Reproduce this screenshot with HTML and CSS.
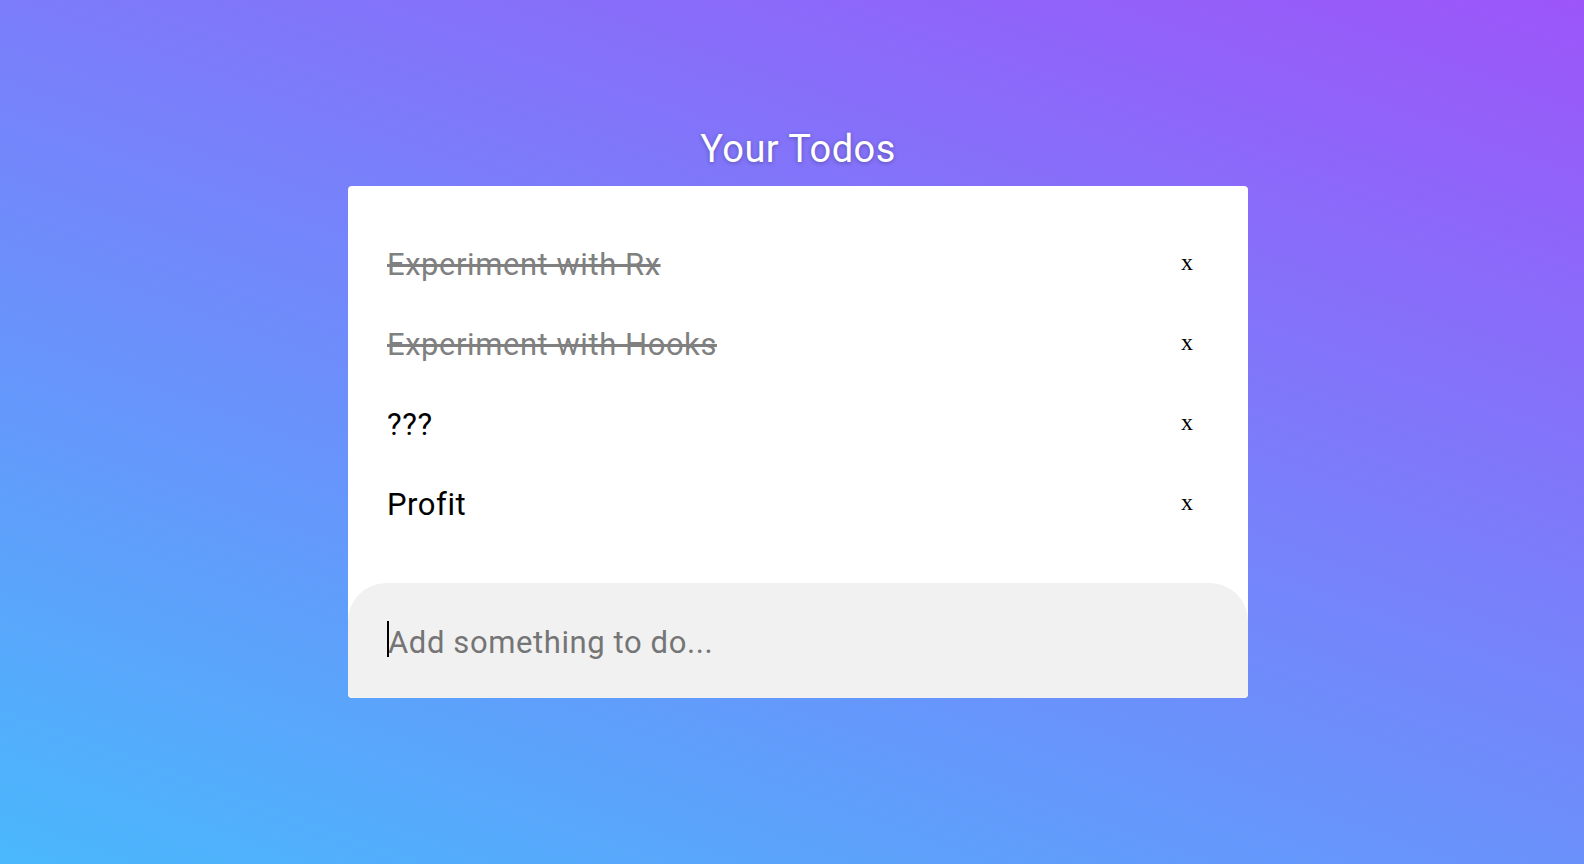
FILE: index.html
```html
<!DOCTYPE html>
<html lang="en">
<head>
<meta charset="utf-8">
<title>Your Todos</title>
<link rel="stylesheet" href="styles.css">
</head>
<body>
<main class="page">
  <h1 class="title">Your Todos</h1>
  <section class="card">
    <ul class="todo-list">
      <li class="todo done"><span class="todo-text">Experiment with Rx</span><button class="remove">x</button></li>
      <li class="todo done"><span class="todo-text">Experiment with Hooks</span><button class="remove">x</button></li>
      <li class="todo"><span class="todo-text">???</span><button class="remove">x</button></li>
      <li class="todo"><span class="todo-text">Profit</span><button class="remove">x</button></li>
    </ul>
    <div class="input-wrap">
      <input class="new-todo" type="text" placeholder="Add something to do...">
    </div>
  </section>
</main>
</body>
</html>
```

FILE: styles.css
```css
html, body {
  margin: 0;
  padding: 0;
  height: 100%;
}

body {
  background: linear-gradient(20deg, #4ab8fc 0%, #9c55f9 100%);
  font-family: Roboto, "Noto Sans", sans-serif;
  overflow: hidden;
}

.page {
  display: flex;
  flex-direction: column;
  align-items: center;
  padding: 127px 0 0 12px;
}

.title {
  margin: 0 0 15px;
  font-size: 38px;
  line-height: 44px;
  font-weight: 400;
  letter-spacing: 0.45px;
  color: #ffffff;
  text-shadow: 0 1px 4px rgba(0, 0, 0, 0.3);
}

.card {
  width: 900px;
  background: #ffffff;
  border-radius: 4px;
  overflow: hidden;
  display: flex;
  flex-direction: column;
}

.todo-list {
  list-style: none;
  margin: 0;
  padding: 38px 40px 39px 39px;
}

.todo {
  height: 80px;
  display: flex;
  align-items: center;
  justify-content: space-between;
}

.todo-text {
  font-size: 31px;
  letter-spacing: 0.55px;
  color: #000000;
}

.todo.done .todo-text {
  color: #808080;
  text-decoration: line-through;
}

.remove {
  border: none;
  background: transparent;
  padding: 0 15px;
  margin-bottom: 4px;
  font-family: "Liberation Serif", serif;
  font-size: 24px;
  color: #000000;
  cursor: pointer;
}

.input-wrap {
  position: relative;
}

.input-wrap::before {
  content: "";
  position: absolute;
  left: 39px;
  top: 38px;
  width: 2px;
  height: 36px;
  background: #000000;
}

.new-todo {
  display: block;
  box-sizing: border-box;
  width: 100%;
  height: 115px;
  margin: 0;
  border: none;
  outline: none;
  background: #f1f1f1;
  border-radius: 38px 38px 4px 4px;
  padding: 4px 40px 0 40px;
  font-family: Roboto, "Noto Sans", sans-serif;
  font-size: 31px;
  letter-spacing: 0.6px;
  color: #000000;
}

.new-todo::placeholder {
  color: #757575;
}
```
